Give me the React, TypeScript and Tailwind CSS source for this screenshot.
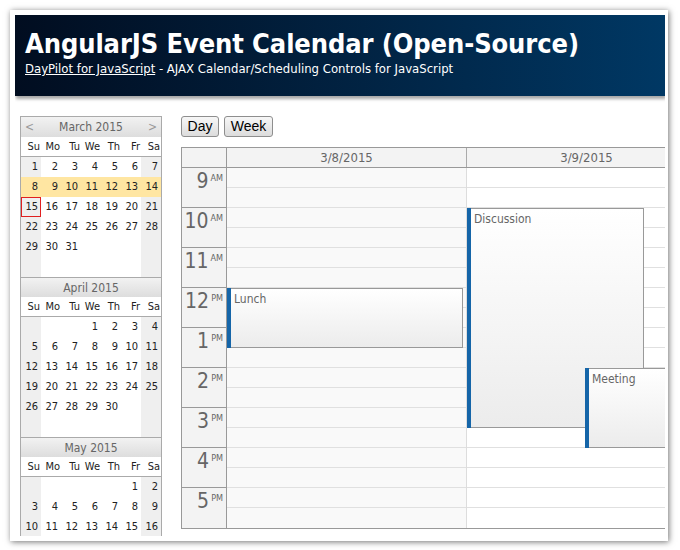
import React from "react";

type Week = (number | null)[];

const months: { title: string; arrows: boolean; weeks: Week[]; highlight?: number; today?: number }[] = [
  {
    title: "March 2015",
    arrows: true,
    highlight: 1,
    today: 15,
    weeks: [
      [1, 2, 3, 4, 5, 6, 7],
      [8, 9, 10, 11, 12, 13, 14],
      [15, 16, 17, 18, 19, 20, 21],
      [22, 23, 24, 25, 26, 27, 28],
      [29, 30, 31, null, null, null, null],
      [null, null, null, null, null, null, null],
    ],
  },
  {
    title: "April 2015",
    arrows: false,
    weeks: [
      [null, null, null, 1, 2, 3, 4],
      [5, 6, 7, 8, 9, 10, 11],
      [12, 13, 14, 15, 16, 17, 18],
      [19, 20, 21, 22, 23, 24, 25],
      [26, 27, 28, 29, 30, null, null],
      [null, null, null, null, null, null, null],
    ],
  },
  {
    title: "May 2015",
    arrows: false,
    weeks: [
      [null, null, null, null, null, 1, 2],
      [3, 4, 5, 6, 7, 8, 9],
      [10, 11, 12, 13, 14, 15, 16],
      [null, null, null, null, null, null, null],
    ],
  },
];

const dayNames = ["Su", "Mo", "Tu", "We", "Th", "Fr", "Sa"];

function Month({ m, first }: { m: (typeof months)[number]; first: boolean }) {
  return (
    <div>
      <div
        className={
          "h-[20px] flex items-center justify-between px-[4px] bg-gradient-to-b from-[#f2f2f2] to-[#dddddd] text-[#666] text-[12px] " +
          (first ? "" : "border-t border-[#aaa]")
        }
      >
        <span className="w-[10px] text-[#999]">{m.arrows ? "<" : ""}</span>
        <span>{m.title}</span>
        <span className="w-[10px] text-right text-[#999]">{m.arrows ? ">" : ""}</span>
      </div>
      <div className="flex h-[20px] border-b border-[#aaa] bg-white text-[11px] text-[#222]">
        {dayNames.map((d) => (
          <div key={d} className="w-[20px] text-right pr-[1px] leading-[19px]">
            {d}
          </div>
        ))}
      </div>
      {m.weeks.map((w, wi) => (
        <div key={wi} className="flex h-[20px]">
          {w.map((d, di) => {
            const weekend = di === 0 || di === 6;
            const hl = m.highlight === wi;
            const bg = hl ? "bg-[#ffe6a2]" : weekend ? "bg-[#efefef]" : "bg-white";
            const today = d !== null && d === m.today;
            return (
              <div
                key={di}
                className={
                  "w-[20px] h-[20px] text-right pr-[2px] text-[11px] text-[#222] leading-[18px] " +
                  bg +
                  (today ? " border border-[#e02020]" : " border border-transparent")
                }
              >
                {d ?? ""}
              </div>
            );
          })}
        </div>
      ))}
    </div>
  );
}

const hours = [
  ["9", "AM"],
  ["10", "AM"],
  ["11", "AM"],
  ["12", "PM"],
  ["1", "PM"],
  ["2", "PM"],
  ["3", "PM"],
  ["4", "PM"],
  ["5", "PM"],
];

function Event({
  text,
  top,
  height,
  left,
  width,
}: {
  text: string;
  top: number;
  height: number;
  left: number;
  width: number;
}) {
  return (
    <div className="absolute flex" style={{ top, height, left, width }}>
      <div className="w-[4px] h-full bg-[#1565a8]" />
      <div className="flex-1 h-full border-y border-r border-[#999] bg-gradient-to-b from-white to-[#ececec] text-[12px] text-[#666] pl-[3px] pt-[2px] leading-[16px]">
        {text}
      </div>
    </div>
  );
}

function DayColumn({ bg, children, last }: { bg: string; children?: React.ReactNode; last?: boolean }) {
  return (
    <div className={"relative w-[240px] shrink-0 " + bg + (last ? "" : " border-r border-[#ddd]")}>
      {Array.from({ length: 18 }).map((_, i) => (
        <div key={i} className={"h-[20px] " + (i === 17 ? "" : "border-b border-[#e0e0e0]")} />
      ))}
      {children}
    </div>
  );
}

export default function App() {
  return (
    <div className="w-[680px] h-[550px] bg-white pt-[10px] pl-[10px] font-['DejaVu_Sans_Condensed',sans-serif]">
      <div className="w-[658px] h-[531px] bg-white shadow-[1px_1px_6px_rgba(0,0,0,0.55)] p-[5px]">
        <div className="w-[650px] h-[521px] overflow-hidden">
          <div className="h-[81px] bg-gradient-to-r from-[#010d20] to-[#003864] shadow-[1px_3px_3px_rgba(0,0,0,0.35)] pl-[10px] pt-[11px] text-white">
            <div className="text-[27px] font-bold leading-[35px] tracking-[-0.1px]">
              AngularJS Event Calendar (Open-Source)
            </div>
            <div className="text-[13px] leading-[16px]">
              <span className="underline">DayPilot for JavaScript</span> - AJAX Calendar/Scheduling Controls for
              JavaScript
            </div>
          </div>
          <div className="flex pl-[5px] pt-[20px]">
            <div className="w-[142px] shrink-0 border border-[#aaa] self-start">
              {months.map((m, i) => (
                <Month key={m.title} m={m} first={i === 0} />
              ))}
            </div>
            <div className="ml-[19px] flex flex-col shrink-0">
              <div className="flex gap-[5px] font-['Liberation_Sans',sans-serif]">
                <button className="h-[21px] w-[38px] border border-[#8e8e8e] rounded-[3px] bg-gradient-to-b from-[#f7f7f7] to-[#dcdcdc] text-[14px] text-black leading-[19px]">
                  Day
                </button>
                <button className="h-[21px] w-[49px] border border-[#8e8e8e] rounded-[3px] bg-gradient-to-b from-[#f7f7f7] to-[#dcdcdc] text-[14px] text-black leading-[19px]">
                  Week
                </button>
              </div>
              <div className="mt-[10px] w-[800px] border border-[#999] bg-white">
                <div className="flex h-[20px] border-b border-[#999] bg-[#f3f3f3] text-[13px] text-[#666] leading-[19px]">
                  <div className="w-[45px] shrink-0 border-r border-[#999]" />
                  <div className="w-[240px] shrink-0 border-r border-[#aaa] text-center">3/8/2015</div>
                  <div className="w-[240px] shrink-0 border-r border-[#aaa] text-center">3/9/2015</div>
                </div>
                <div className="flex">
                  <div className="w-[45px] shrink-0 border-r border-[#999] bg-[#f3f3f3]">
                    {hours.map(([h, ap], i) => (
                      <div
                        key={i}
                        className={
                          "h-[40px] flex justify-end pr-[3px] text-[#666] " +
                          (i === hours.length - 1 ? "" : "border-b border-[#999]")
                        }
                      >
                        <span className="text-[21px] leading-[24px] mt-[1px]">{h}</span>
                        <span className="text-[9px] leading-[10px] mt-[5px] ml-[2px]">{ap}</span>
                      </div>
                    ))}
                  </div>
                  <DayColumn bg="bg-[#f9f9f9]">
                    <Event text="Lunch" top={120} height={60} left={0} width={236} />
                  </DayColumn>
                  <DayColumn bg="bg-white">
                    <Event text="Discussion" top={40} height={220} left={0} width={177} />
                    <Event text="Meeting" top={200} height={80} left={118} width={120} />
                  </DayColumn>
                </div>
              </div>
            </div>
          </div>
        </div>
      </div>
    </div>
  );
}
